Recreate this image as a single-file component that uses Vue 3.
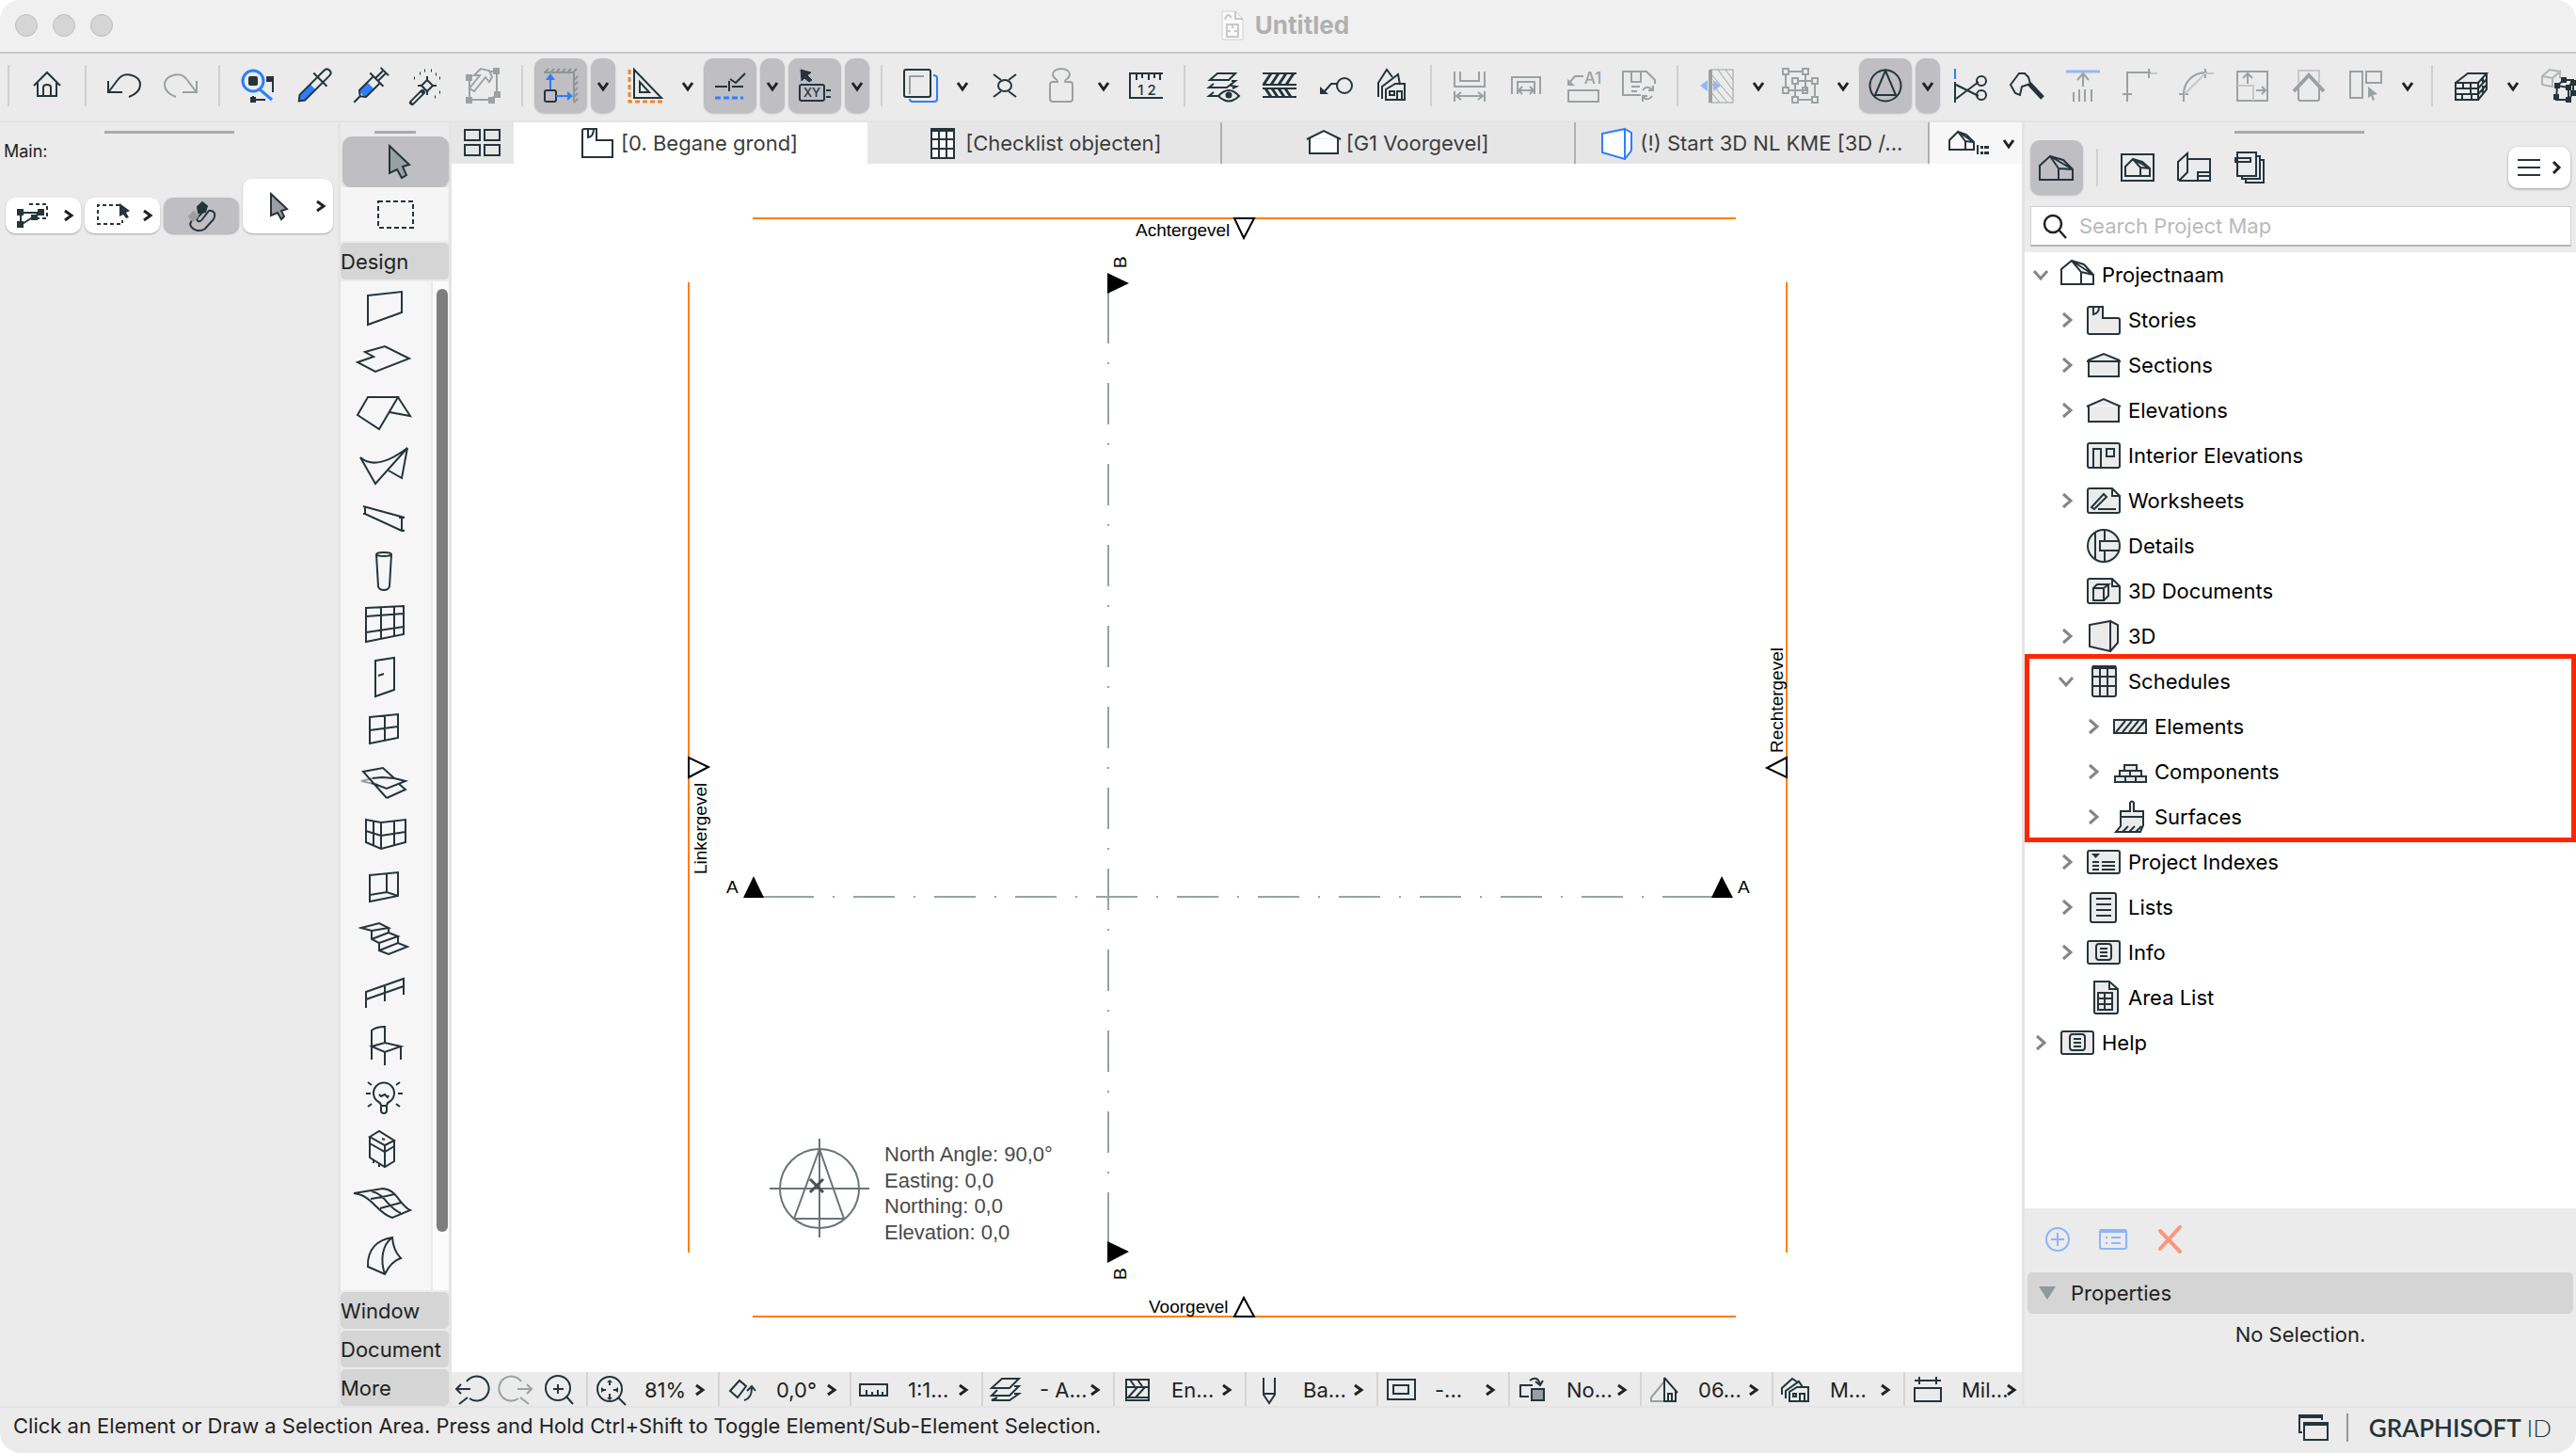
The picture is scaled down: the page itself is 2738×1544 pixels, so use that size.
<script setup>
import { ref } from 'vue'

const query = ref('')
const rect = (x, y, w, h, extra = '') => `<rect x="${x}" y="${y}" width="${w}" height="${h}" ${extra}/>`
const p = (d, extra = '') => `<path d="${d}" ${extra}/>`
const solid = 'fill="currentColor" stroke="none"'
const blue = 'stroke="#2b7fff"'
const paleBlue = 'stroke="#93b9f5"'

// Main toolbar glyphs, drawn around the origin
const bar = {
  home: p('M-14 0L0-14L14 0M-10-3V11H10V-3M-4 11V2Q-4-1 0-1Q4-1 4 2V11'),
  undo: p('M-17-5V7H-2M-16 6L-7-6C-2-13 5-12 8-11C20-8 21 6 5 12'),
  redo: p('M17-5V7H2M16 6L7-6C2-13-5-12-8-11C-20-8-21 6-5 12'),
  find: `<circle cx="-5" cy="-5" r="11" ${blue} stroke-width="3"/>` + p('M2 4L15 15', blue + ' stroke-width="3"') + rect(-10, -10, 10, 10, solid + ' rx="2"') + p('M16-10V7M16-9H11M-5 11V15H8') + rect(9, -10, 6, 6, solid) + rect(-8, 12, 6, 6, solid),
  dropper: `<g transform="rotate(45)">${p('M-4 2H4V18L0 23L-4 18Z', 'fill="#2b7fff" stroke="none"')}${p('M-4 18V-19Q-4-23 0-23Q4-23 4-19V18L0 23ZM-10-9H10')}</g>`,
  syringe: `<g transform="rotate(45)">${rect(-5, 0, 10, 13, 'fill="#2b7fff" stroke="none"')}${p('M-5-9V12L0 16L5 12V-9M0 16V25M-10-9H10M-2-9V-20M2-9V-20M-6-21H6')}</g>`,
  wand: p('M0-6L6 0L0 6L-6 0ZM0-10V-6M10 0H6M0 10V6M-10 0H-6') + p('M-5 7L-16 18', 'stroke-width="6" stroke-linecap="round"') + p('M-6 8L-16 18', 'stroke="#ebebeb" stroke-width="2"') + p('M-8-13h1M-3-16h1M4-16h1M9-12h1M13-8h1M13 7h1M-14-8h1M8 12h1', 'stroke-width="3"'),
  adjust: p('M-15-9V15H8L14 9V-15H5') + rect(-19, -12, 7, 7, solid) + rect(10, -19, 7, 7, solid) + rect(11, 6, 7, 7, solid) + rect(5, 12, 7, 7, solid) + rect(-19, 12, 7, 7, solid) + p('M-10-11L-3-18L6-16L9-9L6-4L2-9L-10 6L-15 3L-4-11Z', 'fill="#ebebeb"'),
  gravity: p('M-18-14H14V17M-17-14l4-4M-11-14l4-4M-5-14l4-4M1-14l4-4M7-14l4-4M13-14l4-4M14-6l4-4M14 0l4-4M14 6l4-4M14 12l4-4M14 18l4-4', 'stroke="#8f9497"') + rect(-17, 5, 12, 12, 'rx="2"') + p('M-11 4V-9M-5 11H10', blue) + p('M-16-6L-11-13L-6-6ZM7 6L13 11L7 16Z', 'fill="#2b7fff" stroke="none"'),
  square: p('M-17-17V17H18', 'stroke="#f58220" stroke-width="3" stroke-dasharray="5 3"') + p('M-12-17V13H17ZM-6-4V7H4Z'),
  snap: p('M-16 1H-3M2 1H14M-1-5V6') + p('M0-7L6-3L16-13') + p('M-16 13H14', blue + ' stroke-width="3" stroke-dasharray="6 3"'),
  xy: p('M-15-17L-4-14L-8-11L-3-6L-6-4L-11-8L-14-5Z', 'fill="currentColor" stroke-width="1"') + rect(-16, -1, 26, 17, 'rx="2"') + '<text x="-3" y="12" text-anchor="middle" font-size="13">XY</text>' + p('M12 5H17M12 12H17'),
  trace: rect(-17, -17, 28, 29, 'rx="2"') + p('M-11 9V-10H4', 'stroke="#999fa2"') + p('M14-11Q18-11 18-8V14Q18 17 15 17H-8Q-11 17-11 14', blue),
  node: '<ellipse rx="7" ry="6"/>' + p('M-12-12L-4-6M12-12L4-6M-12 12L-4 6M12 12L4 6'),
  stamp: p('M-4-4C-3-7-9-7-9-12A9 6 0 0 1 9-12C9-7 3-7 4-4H9Q12-4 12-1V14Q12 17 9 17H-9Q-12 17-12 14V-1Q-12-4-9-4Z'),
  ruler: p('M18-13H-17V13H18M-10-13V-6M-4-13V-8M3-13V-6M9-13V-8M15-13V-6') + '<text x="1" y="10" text-anchor="middle" font-size="15">1 2</text>',
  layers: p('M-6-13H13L6-6H-14ZM-10-2L-15 2H4L13-5L9-5M-10 7L-15 11H-4M8 0L14 1L10 3') + p('M-5 11Q6-1 17 11Q6 22-5 11Z', 'fill="#ebebeb"') + `<circle cx="6" cy="10" r="3.5" ${solid}/>`,
  hatch: p('M-18-13H18M-18-1H18M-18 3H18M-18 12H18') + p('M-17-1L-9-13M-9-1L-1-13M-1-1L7-13M7-1L15-13M-15 3L-9 12M-8 3L-2 12M-1 3L5 12M6 3L12 12', 'stroke-width="3"'),
  leader: '<circle cx="9" cy="0" r="8"/>' + p('M1-2H-5L-13 7') + p('M-17 1L-8 9L-17 9Z', solid),
  houses: p('M-15 12V-3L-6-17L0-9M-11 14V1L6-12L8-1M-7 15V4L3-2H13V15ZM5 15V6H10V15M-3 6H2V10H-3Z'),
  dimA: p('M-16-15V1H16V-15M-10-15V-5H10V-15M-16 6V17M16 6V17M-14 11H14M-9 7L-14 11L-9 15M9 7L14 11L9 15'),
  dimB: p('M-15 9V-9H15V9M-9 9V-4H9V9M-8 5H8M-4 1L-8 5L-4 9M4 1L8 5L4 9'),
  label: rect(-15, 5, 32, 12) + p('M-15-2L-8-10H1') + p('M-16-7L-8 0L-16 0Z', solid) + '<text x="11" y="-2" text-anchor="middle" font-size="17">A1</text>',
  update: p('M2 10H-17V-15H8L17-6V-2M-8-15V-4H2V-15M-8 1H1M-8 6H-2') + p('M4 5Q8-1 14 4M15 0V5H10M14 11Q10 17 4 12M4 17V11H9'),
  mirror: rect(-6, -17, 24, 35, 'stroke-width="1"') + p('M-6-17V18', 'stroke-width="4"') + p('M2-17L18 5M-6-13L18 15M-6-4L12 18M-6 6L4 18M10-17L18-6', 'stroke-width="1"') + p('M-9-6V6L-17 0ZM-3-6V6L5 0Z', 'fill="#93b9f5" stroke="none"'),
  group: p('M-16-15H5V5H-16ZM-6-5H15V15H-6Z') + [[-16, -15], [5, -15], [-16, 5], [-6, -5], [15, -5], [-6, 15], [15, 15]].map(([x, y]) => rect(x - 3, y - 3, 6, 6, 'fill="#ebebeb"')).join('') + rect(2, 2, 5, 6),
  suspend: '<circle r="16.5"/>' + p('M0-16L11 10H-11Z'),
  scissors: p('M-16-18V-7', blue) + p('M-16-4V18M-15-1L9 11M-15 14L9-4') + '<circle cx="12" cy="-5" r="5"/><circle cx="12" cy="10" r="5"/>',
  axe: p('M-8-13L-17-1L-12 8L-7 10L-5 1L4-2L2-9L-2-13Z') + p('M3-2L17 13', 'stroke-width="5"'),
  raise: p('M-18-15H18', paleBlue + ' stroke-width="3"') + p('M0 1V-12M-6-6L0-13L6-6M-10 7V17M-4 4V17M2 4V17M9 4V17'),
  corner: p('M-13 17V-14H12M-18 9H-8M10-18V-8') + p('M12-13H19', 'stroke="#c5c8ca"'),
  arc: p('M-13 17V9C-13 0-7-14 12-14M-18 9H-8M10-18V-8') + p('M-12 9L10-13H19', 'stroke="#c5c8ca"'),
  resize: rect(-16, -15, 32, 31) + p('M-16 0H1V16', 'stroke="#c5c8ca"') + p('M-5-2V-12M-10-8L-5-13L0-8M4 5H14M10 1L14 5L10 9'),
  roofUp: p('M-11-3V-16H11V-3', 'stroke="#c5c8ca"') + p('M-16 6L0-11L16 6', 'stroke-width="4"') + p('M-11 3V14Q-11 16-9 16H9Q11 16 11 14V3'),
  align: rect(-16, -15, 13, 28) + rect(1, -15, 16, 12) + p('M3 1L13 9L8 10L10 15L8 16L6 11L3 13Z', solid),
  bricks: p('M-16-3V15H8V-3ZM-16-3L-3-13H17L8-3M17-13V4L8 15M-16 3H8M-16 9H8M-8-3V3M0 3V9M-9 9V15M1 9V15M0-3V3M8 3L17-7M8 9L17-1M13-8V-2M13 0V8'),
  morph: p('M-14-1V-10L-6-17L5-15M-14-1L-3 1V-8L5-15V-8M-14-10L-3-8', 'stroke="#b0b4b6"') + p('M2 0L9-6H19V8L14 15H1ZM2 0L14 2V15M14 2L19-6') + [[2, 0], [9, -6], [14, 2], [14, 15], [1, 12], [19, 8], [19, -3]].map(([x, y]) => rect(x - 3, y - 3, 6, 6, solid)).join(''),
}

const B = (icon, opt = {}) => ({ kind: 'tool', icon, ...opt })
const gray = { dim: true }
const on = { on: true }
const D = (opt = {}) => ({ kind: 'drop', ...opt })
const S = { kind: 'sep' }
const toolbar = [
  S, B('home'), S, B('undo'), B('redo', gray), S,
  B('find'), B('dropper'), B('syringe'), B('wand'), B('adjust', gray), S,
  B('gravity', on), D(on), B('square'), D(), B('snap', on), D(on), B('xy', on), D(on), S,
  B('trace'), D(), B('node'), B('stamp', gray), D(), B('ruler'), S,
  B('layers'), B('hatch'), B('leader'), B('houses'), S,
  B('dimA', gray), B('dimB', gray), B('label', gray), B('update', gray), S,
  B('mirror', gray), D(), B('group', gray), D(), B('suspend', on), D(on),
  B('scissors'), B('axe'), B('raise', gray), B('corner', gray), B('arc', gray),
  B('resize', gray), B('roofUp', gray), B('align', gray), D(), S,
  B('bricks'), D(), B('morph'),
]

const designTools = [
  ['Wall', p('M-19-13L17-17V5L-19 18Z')],
  ['Slab', p('M-22-9L-1-15L25-2L-11 12L-30 2L-13-4Z')],
  ['Roof', p('M-19-17H13L-7 17L-30 2ZM13-17L26 3L4-1')],
  ['Shell', p('M-27-9Q-10 6 23-19L-11 19ZM23-19L17 13L3 5')],
  ['Beam', p('M-24-13L20-1M-24-5H-22L17 13H20M-22-12V-5M17-1V13M14-1H20M14 12L20 13')],
  ['Column', '<ellipse cx="-2" cy="-18" rx="8" ry="2"/>' + p('M-10-18L-8 16Q-7 20-2 20Q3 20 4 16L6-18')],
  ['Curtain wall', p('M-21-17L19-19V11L-21 19ZM-5-18V16M9-19V13M-21-8L19-11M-21 9L19 3')],
  ['Door', p('M-11-17L9-20V14L-11 21ZM-8-1L-2-3')],
  ['Window', p('M-17-13L13-16V9L-17 15ZM-1-14V12M-17 1L13-3')],
  ['Skylight', p('M-14-4L-26-1L-8 3', 'stroke="#999fa2"') + p('M1 17L-24-11L-3-15L9-4M14 2L21 8L1 17M9-4L21-1L1 7L-15 1M-14-4L-4-5L9-4')],
  ['Corner window', p('M-21-16L-5-13L21-16V8L-5 15L-21 8ZM-5-13V15M-13-14V11M9-15V11M-21-4L-5 1L21-3')],
  ['Opening', p('M-17-13L13-16V9L-17 15ZM1-14V5M-17 8L1 5L13 9')],
  ['Stair', p('M-26-13L-7-18L3-13L-15-10ZM-15-10V-1L-7 3V11L3 15L23 7L13 3L-7 11M3-13V-8L-15-1M3-8L13-4L-7 3M13-4V3')],
  ['Railing', p('M-21 16V-1L19-15V2M-1-8V9M-21 7L19-7')],
  ['Object', p('M-15 15V-16Q-10-20-1-20V-3M-15 1L-1-3L16 1L-1 7ZM-1 7V21M16 1V15')],
  ['Lamp', p('M-5 8Q-5 5-9 3A11 11 0 1 1 5 3Q1 5 1 8V13Q1 16-2 16Q-5 16-5 13ZM-5 8H1M-7-4L-5-2L-1-4L2-1L3-3M-19-17L-15-14M-21-5H-16M-19 9L-15 6M15-17L11-14M18-5H13M15 9L11 6')],
  ['Equipment', p('M-17-15L-7-21L9-11L-1-6ZM-17-15V7L-1 17L9 11V-11M-1-6V17M-17-8L-1 1L9-5M-4-13L-1-12M-13 10V13M-7 14V17')],
  ['Mesh', p('M-34-11Q-15-14-3-16C12-15 14 1 26 7L7 15C-10 10-14-9-34-11M-15-13C0-10 2 5 16 10M-16-5Q-2-7 9-10M-6 5Q5 2 16-1')],
  ['Morph', p('M-19 11C-20-8-8-18 7-20Q8-6 16 2Q6 5-1 19ZM7-20C-4-12-6 4-1 19')],
]

// Navigator tree glyphs share a 36 x 36 box
const f = 'fill="#ebebeb"'
const tree = {
  project: p('M1 28V12L12 3L22 15V28ZM12 3L25 7L35 18V28H22M22 15L35 18M12 3L35 18'),
  stories: p('M3 4H17V16H33Q35 16 35 18V31Q35 33 33 33H3Q1 33 1 31V6Q1 4 3 4ZM7 4V12Q13 11 13 4', f),
  sections: p('M2 14V30H34V14M0 14H36M1 13L18 6L35 13', f),
  elevations: p('M2 13V30H34V13M0 14L18 6L36 14', f),
  interior: rect(1, 5, 34, 26, 'rx="2" ' + f) + p('M7 31V11H15V31M21 11H29V19H21Z'),
  worksheet: p('M3 5H27L35 13V29Q35 31 33 31H3Q1 31 1 29V7Q1 5 3 5ZM27 5V13H35M5 25L18 11L21 14L8 27ZM12 27H31', f),
  details: '<circle cx="18" cy="18" r="17" fill="#ebebeb"/>' + p('M9 4V32M19 1V13M19 23V35M35 13H14V23H35'),
  docs3d: p('M3 5H27L35 13V29Q35 31 33 31H3Q1 31 1 29V7Q1 5 3 5ZM27 5V13H35M7 15H18V28H7ZM7 15L11 11H23L18 15M23 11V23L18 28', f),
  cube: p('M3 6L25 2V34L3 29ZM25 2L33 6V25L25 34', f),
  schedules: rect(6, 2, 25, 32, 'rx="2" ' + f) + p('M6 3H31', 'stroke-width="4"') + p('M6 13H31M6 23H31M14 3V34M22 3V34'),
  elements: rect(1, 11, 34, 14, f) + p('M3 24L13 12M10 24L20 12M17 24L27 12M24 24L34 12'),
  components: p('M2 29V23H35V29ZM7 23V17H30V23ZM12 17V11H25V17ZM13 23V29M24 23V29M18 17V23', f),
  surfaces: p('M18 12V3Q20 0 22 3V12H32V27L29 34H3L8 28V12ZM8 18H32M10 34L16 28M17 34L23 28M24 34L30 28', f),
  indexes: rect(1, 6, 34, 24, 'rx="2" ' + f) + p('M5 9H14L9.500 14Z', solid) + p('M6 18H13M6 22H13M6 26H13M16 18H30M16 22H30M16 26H30'),
  lists: rect(4, 3, 27, 31, 'rx="2" ' + f) + p('M10 9H26M10 15H26M10 21H26M10 27H26'),
  info: rect(1, 6, 34, 24, 'rx="2" ' + f) + rect(10, 9, 16, 17, 'rx="3"') + p('M14 14H22M14 18H22M14 22H22'),
  area: p('M8 1H24L33 9V33Q33 35 31 35H10Q8 35 8 33ZM24 1V9H33M12 13H27V31H12ZM12 19H27M12 25H27M19 13V31', f),
}
const topNodes = [
  ['Stories', 'stories', true], ['Sections', 'sections', true], ['Elevations', 'elevations', true],
  ['Interior Elevations', 'interior', false], ['Worksheets', 'worksheet', true], ['Details', 'details', false],
  ['3D Documents', 'docs3d', false], ['3D', 'cube', true],
]
const scheduleNodes = [['Elements', 'elements'], ['Components', 'components'], ['Surfaces', 'surfaces']]
const lowerNodes = [['Project Indexes', 'indexes', true], ['Lists', 'lists', true], ['Info', 'info', true], ['Area List', 'area', false]]

const tabs = [
  ['[0. Begane grond]', p('M3 3H16V15H33V33H1V5Q1 3 3 3ZM7 3V12Q13 11 13 3', 'fill="#fff"')],
  ['[Checklist objecten]', rect(6, 3, 24, 31, 'fill="#fff"') + p('M6 4H30', 'stroke-width="4"') + p('M6 14H30M6 24H30M14 3V34M22 3V34')],
  ['[G1 Voorgevel]', p('M3 13V29H33V13M0 14L18 5L36 14', 'fill="#fff"')],
  ['(!) Start 3D NL KME [3D /...', p('M2 8L26 3V35L2 28ZM26 3L33 7V26L26 35', 'fill="#fff" ' + blue)],
]

const zoomTools = [
  ['Previous zoom', false, p('M-6-8A13 13 0 1 1-3 10M-2 0H-17M-12-5L-17 0L-12 5M-5 9L-14 16')],
  ['Next zoom', true, p('M6-8A13 13 0 1 0 3 10M2 0H17M12-5L17 0L12 5M5 9L14 16')],
  ['Zoom in', false, '<circle cx="-1" cy="-1" r="13"/>' + p('M-6 0H5M-1-5V5M8 8L15 16')],
]
const quick = [
  ['81%', '<circle cx="-1" cy="-1" r="13"/>' + p('M8 8L16 16M-5 0H-10M3 0H8M-1-5V-10M-1 4V9') + p('M-10-3V3L-6 0ZM8-3V3L4 0ZM-4-8H2L-1-11ZM-4 8H2L-1 11Z', solid)],
  ['0,0°', p('M-13 1L-3-10L4-4L-5 8ZM2 11Q10 9 10-2M5 1L10-4L14 1')],
  ['1:1...', rect(-15, -6, 29, 12) + p('M-8 6V0M-2 6V2M4 6V0M9 6V2')],
  ['- A...', p('M-4-12H14L4-2H-15ZM-9 0L-15 6H4L14-4H9M-9 8L-15 11H4L14 4H9')],
  ['En...', rect(-12, -11, 24, 22) + p('M-12-3H12M-12 8H12M-8-11L-3-4M0-11L5-4M-10 8L0-3M-2 8L8-3')],
  ['Ba...', p('M-6-13V5L0 14L6 5V-13M-6 4H6')],
  ['-...', rect(-14, -11, 29, 21) + rect(-8, -5, 16, 9)],
  ['No...', rect(-1, -1, 13, 12, 'fill="#999fa2"') + p('M0-5H-13V7H-4M-3-10Q5-16 8-6M3-9L8-5L11-10')],
  ['06...', p('M0-9L-14 8V12H0', 'stroke="#999fa2"') + p('M0-13V12H12V0M0-13L14 3M4 12V4H8V12')],
  ['M...', p('M-15 5V-2L-4-12L2-8M-11 9V1L3-9L7-3M-7 12V2L1-3H13V12ZM4 12V4H9V12M-3 4H0V7H-3Z')],
  ['Mil...', rect(-14, -2, 28, 14) + p('M-14-10H14M-9-14V-6M9-14V-6')],
]
</script>

<template>
  <div class="window">
    <header class="titlebar">
      <span class="lights"><i></i><i></i><i></i></span>
      <svg class="docicon" width="24" height="32" viewBox="0 0 24 32"><path d="M1 1H15L23 9V31H1Z" fill="#fafafa" stroke="#d2d2d2" /><path d="M4 10Q7 1 11 8M15 1V9H23M6 15H18V28H6ZM6 22H10M14 22H18M12 15V19" fill="none" stroke="#c8c8c8" stroke-width="2" /></svg>
      <h1>Untitled</h1>
    </header>

    <nav class="toolbar" aria-label="Toolbar">
      <template v-for="(t, i) in toolbar" :key="i">
        <span v-if="t.kind === 'sep'" class="sep"></span>
        <button v-else-if="t.kind === 'tool'" class="tool" :class="{ on: t.on, dim: t.dim }" :aria-label="t.icon">
          <svg class="ic" width="40" height="40" viewBox="-20 -20 40 40" v-html="bar[t.icon]"></svg>
        </button>
        <button v-else class="drop" :class="{ on: t.on }" aria-label="Options">
          <svg class="chev" width="12" height="12" viewBox="-6 -6 12 12"><path d="M-5-3L0 4L5-3" /></svg>
        </button>
      </template>
    </nav>

    <div class="body">
      <aside class="info">
        <div class="grip wide"></div>
        <p>Main:</p>
        <div class="info-row">
          <button class="pill" aria-label="Favorites">
            <svg class="ic" width="34" height="28" viewBox="-17 -14 34 28"><path d="M-4-12H15V3H2" stroke-dasharray="4 3" /><path d="M-14-3H9M-13-3V10L9-4" /><path d="M-17-7h7v7h-7zM-17 6h7v7h-7zM5-7h7v7h-7zM-2-1h7v6h-7z" fill="currentColor" stroke="none" /></svg>
            <svg class="chev" width="12" height="12" viewBox="-6 -6 12 12"><path d="M-3-5L4 0L-3 5" /></svg>
          </button>
          <button class="pill" aria-label="Selection method">
            <svg class="ic" width="34" height="28" viewBox="-17 -14 34 28"><path d="M8-11H-15V9H11V5" stroke-dasharray="4 3" /><path d="M8-13L19-5L15-3L18 2L15 3L12-1L8 1Z" fill="currentColor" stroke="none" /></svg>
            <svg class="chev" width="12" height="12" viewBox="-6 -6 12 12"><path d="M-3-5L4 0L-3 5" /></svg>
          </button>
          <button class="pill magnet" aria-label="Magnet">
            <svg class="ic" width="34" height="34" viewBox="-17 -17 34 34"><path d="M-9 3L-12 9C-10 16-2 18 4 14L13 4C16-2 13-6 8-5L1 4C-2 8-6 6-4 2L4-6" /><path d="M-4-9L1-14L6-10L4-4L-3-3Z" fill="currentColor" /><path d="M-13 1L-8-4L-4 1L-9 6Z" fill="#999fa2" stroke="#999fa2" /></svg>
          </button>
          <button class="pill tall" aria-label="Arrow options">
            <svg class="ic" width="34" height="34" viewBox="-17 -17 34 34"><path d="M-7-13L10 3L4 5L7 11L4 14L0 7L-7 10Z" fill="#999fa2" /></svg>
            <svg class="chev" width="12" height="12" viewBox="-6 -6 12 12"><path d="M-3-5L4 0L-3 5" /></svg>
          </button>
        </div>
      </aside>

      <aside class="toolbox">
        <div class="grip short"></div>
        <button class="arrow" aria-label="Arrow">
          <svg class="ic" width="40" height="40" viewBox="-20 -20 40 40"><path d="M-7-17L14 3L7 5L11 14L6 17L1 8L-7 12Z" fill="#999fa2" /></svg>
        </button>
        <button class="marquee" aria-label="Marquee">
          <svg class="ic" width="40" height="32" viewBox="-20 -16 40 32"><rect x="-18" y="-14" width="37" height="28" stroke-dasharray="5 3" /></svg>
        </button>
        <button class="group design">Design</button>
        <div class="tools">
          <div class="list">
            <button v-for="[name, art] in designTools" :key="name" :aria-label="name">
              <svg class="ic" width="72" height="48" viewBox="-36 -24 72 48" v-html="art"></svg>
            </button>
          </div>
          <div class="track"><div class="thumb"></div></div>
        </div>
        <button class="group">Window</button>
        <button class="group">Document</button>
        <button class="group">More</button>
      </aside>

      <main class="workspace">
        <div class="tabs">
          <button class="overview" aria-label="Tab overview">
            <svg class="ic" width="40" height="30" viewBox="0 0 40 30"><path d="M1 1H17V12H1ZM22 1H38V12H22ZM1 17H17V28H1ZM22 17H38V28H22Z" /></svg>
          </button>
          <button v-for="([label, art], i) in tabs" :key="label" class="tab" :class="{ active: i === 0 }">
            <svg class="ic" width="36" height="36" viewBox="0 0 36 36" v-html="art"></svg>
            <span>{{ label }}</span>
          </button>
          <button class="popup" aria-label="Navigator popup">
            <svg class="ic" width="44" height="28" viewBox="0 0 44 28"><path d="M1 21V11L10 2L18 12V21ZM10 2L19 5L27 13V21H18M18 12L27 13M10 2L27 13M31 16V26" /><path d="M34 17h3v3h-3zM38 17h5v3h-5zM34 23h3v3h-3zM38 23h5v3h-5z" fill="currentColor" stroke="none" /></svg>
            <svg class="chev" width="12" height="12" viewBox="-6 -6 12 12"><path d="M-5-3L0 4L5-3" /></svg>
          </button>
        </div>

        <div class="canvas">
          <svg viewBox="480 174 1669 1284">
            <g stroke="#ff8000" stroke-width="2">
              <path d="M800 232H1845M800 1399H1845M732 300V1331M1899 300V1331" />
            </g>
            <g stroke="#98a2a5" stroke-width="2">
              <path d="M1178 300V330M1178 1300V1331M800 953H830M1800 953H1840" />
              <path d="M1178 321V1311M821 953H1811" stroke-dasharray="44 20 2 20" />
            </g>
            <path d="M1177 290L1200 301L1177 312ZM1177 1319L1200 1330L1177 1342ZM790 954L801 931L812 954ZM1819 954L1830 931L1842 954Z" fill="#000" />
            <path d="M1312 232H1333L1322 253ZM1312 1399H1333L1322 1379ZM732 805V826L753 815ZM1899 805V826L1878 816Z" fill="#fff" stroke="#000" stroke-width="2" />
            <g class="marks">
              <text x="1207" y="251">Achtergevel</text>
              <text x="1221" y="1395">Voorgevel</text>
              <text transform="translate(751 929) rotate(-90)">Linkergevel</text>
              <text transform="translate(1895 800) rotate(-90)">Rechtergevel</text>
              <text x="772" y="949">A</text>
              <text x="1847" y="949">A</text>
              <text transform="translate(1197 285) rotate(-90)">B</text>
              <text transform="translate(1197 1360) rotate(-90)">B</text>
            </g>
            <g fill="none" stroke="#697478" stroke-width="2">
              <circle cx="871" cy="1263" r="42" />
              <path d="M818 1263H924M871 1210V1315M871 1221L844 1295H897Z" />
              <path d="M861 1253L875 1267M875 1253L861 1267" stroke="#4a4f52" stroke-width="3" />
            </g>
            <g class="north">
              <text x="940" y="1234">North Angle: 90,0°</text>
              <text x="940" y="1262">Easting: 0,0</text>
              <text x="940" y="1289">Northing: 0,0</text>
              <text x="940" y="1317">Elevation: 0,0</text>
            </g>
          </svg>
        </div>

        <div class="quickbar">
          <div class="zooms">
            <button v-for="[name, dim, art] in zoomTools" :key="name" :class="{ dim }" :aria-label="name">
              <svg class="ic" width="36" height="34" viewBox="-18 -17 36 34" v-html="art"></svg>
            </button>
          </div>
          <button v-for="[label, art] in quick" :key="label" class="quick">
            <svg class="ic" width="36" height="34" viewBox="-18 -17 36 34" v-html="art"></svg>
            <span>{{ label }}</span>
            <svg class="chev" width="12" height="12" viewBox="-6 -6 12 12"><path d="M-3-5L4 0L-3 5" /></svg>
          </button>
        </div>
      </main>

      <aside class="navigator">
        <div class="grip wide"></div>
        <div class="maps">
          <button class="tool on" aria-label="Project Map">
            <svg class="ic" width="40" height="30" viewBox="0 0 40 30"><path d="M2 28V13L13 3L22 16V28ZM13 3L27 7L37 17V28H22M22 16L37 17M13 3L37 17" /></svg>
          </button>
          <span class="sep"></span>
          <button class="tool" aria-label="View Map">
            <svg class="ic" width="40" height="32" viewBox="0 0 40 32"><path d="M3 2H37V30H3ZM7 25V15L15 7L23 16V25ZM15 7L25 10L33 17V25H23M23 16L33 17M15 7L33 17" /></svg>
          </button>
          <button class="tool" aria-label="Layout Book">
            <svg class="ic" width="40" height="36" viewBox="0 0 40 36"><path d="M3 32V12L13 3V23L4 32M13 9H37V32H4M24 32V23H37M24 27H37" /></svg>
          </button>
          <button class="tool" aria-label="Publisher Sets">
            <svg class="ic" width="40" height="36" viewBox="0 0 40 36"><path d="M6 2H26V27H6ZM4 8H20V12H4ZM26 6H30V30H11V27M30 10H34V34H15V30" /></svg>
          </button>
          <button class="menu" aria-label="Navigator menu">
            <svg class="ic" width="26" height="20" viewBox="0 0 26 20"><path d="M1 2H25M1 10H25M1 18H25" /></svg>
            <svg class="chev" width="12" height="14" viewBox="-6 -7 12 14"><path d="M-3-6L3 0L-3 6" /></svg>
          </button>
        </div>
        <label class="search">
          <svg width="28" height="28" viewBox="0 0 28 28" fill="none" stroke="#222" stroke-width="2.500"><circle cx="12" cy="12" r="9" /><path d="M18 18L26 27" /></svg>
          <input v-model="query" type="search" placeholder="Search Project Map" aria-label="Search Project Map" />
        </label>

        <ul class="tree">
          <li>
            <button class="row"><svg class="tw" width="20" height="20" viewBox="-10 -10 20 20"><path d="M-7-4L0 4L7-4" /></svg><svg class="ic" width="36" height="36" viewBox="0 0 36 36" v-html="tree.project"></svg>Projectnaam</button>
            <ul>
              <li v-for="[label, icon, kids] in topNodes" :key="label">
                <button class="row l1"><svg class="tw" width="20" height="20" viewBox="-10 -10 20 20"><path v-if="kids" d="M-4-7L4 0L-4 7" /></svg><svg class="ic" width="36" height="36" viewBox="0 0 36 36" v-html="tree[icon]"></svg>{{ label }}</button>
              </li>
              <li class="highlight">
                <button class="row l1"><svg class="tw" width="20" height="20" viewBox="-10 -10 20 20"><path d="M-8-4L-1 4L6-4" /></svg><svg class="ic" width="36" height="36" viewBox="0 0 36 36" v-html="tree.schedules"></svg>Schedules</button>
                <ul>
                  <li v-for="[label, icon] in scheduleNodes" :key="label">
                    <button class="row l2"><svg class="tw" width="20" height="20" viewBox="-10 -10 20 20"><path d="M-4-7L4 0L-4 7" /></svg><svg class="ic" width="36" height="36" viewBox="0 0 36 36" v-html="tree[icon]"></svg>{{ label }}</button>
                  </li>
                </ul>
              </li>
              <li v-for="[label, icon, kids] in lowerNodes" :key="label">
                <button class="row l1"><svg class="tw" width="20" height="20" viewBox="-10 -10 20 20"><path v-if="kids" d="M-4-7L4 0L-4 7" /></svg><svg class="ic" width="36" height="36" viewBox="0 0 36 36" v-html="tree[icon]"></svg>{{ label }}</button>
              </li>
            </ul>
          </li>
          <li>
            <button class="row"><svg class="tw" width="20" height="20" viewBox="-10 -10 20 20"><path d="M-4-7L4 0L-4 7" /></svg><svg class="ic" width="36" height="36" viewBox="0 0 36 36" v-html="tree.info"></svg>Help</button>
          </li>
        </ul>

        <section class="props">
          <div class="actions">
            <button aria-label="New"><svg width="28" height="28" viewBox="-14 -14 28 28" stroke="#8ab5fb" stroke-width="2" fill="none"><circle r="12" /><path d="M-7 0H7M0-7V7" /></svg></button>
            <button aria-label="Settings"><svg width="30" height="24" viewBox="0 0 30 24" stroke="#8ab5fb" stroke-width="2" fill="none"><rect x="1" y="2" width="28" height="20" rx="2" /><path d="M1 3H29" stroke-width="4" /><path d="M7 10H9M7 16H9M13 10H23M13 16H23" /></svg></button>
            <button aria-label="Delete"><svg width="30" height="30" viewBox="-15 -15 30 30" stroke="#fb967e" stroke-width="4" stroke-linecap="round" fill="none"><path d="M-10-9L11 13M-10 10L11-13" /></svg></button>
          </div>
          <button class="props-head"><svg width="18" height="14" viewBox="0 0 18 14"><path d="M0 0H18L9 14Z" fill="#90989b" /></svg>Properties</button>
          <p>No Selection.</p>
        </section>
      </aside>
    </div>

    <footer class="status">
      <span>Click an Element or Draw a Selection Area. Press and Hold Ctrl+Shift to Toggle Element/Sub-Element Selection.</span>
      <div class="brand">
        <svg class="ic" width="34" height="30" viewBox="0 0 34 30"><path d="M5 20H2V2H26V7M7 10H32V28H7Z" /><path d="M1 3H27M7 11H33" stroke-width="4" /></svg>
        <i></i>
        <a href="#">GRAPHISOFT <span>ID</span></a>
      </div>
    </footer>
  </div>
</template>

<style>
body { background: #fff; }
</style>

<style scoped>
.window {
  min-height: 100vh; display: flex; flex-direction: column; overflow: hidden;
  background: #ebebeb; color: #222; border-radius: 22px;
  font: 22px/28px Inter, "Noto Sans", sans-serif;
}
.window :deep(*) { box-sizing: border-box; }
button { border: 0; padding: 0; margin: 0; background: none; font: inherit; color: inherit; cursor: pointer; }
ul { list-style: none; margin: 0; padding: 0; }
p, h1 { margin: 0; }
svg { flex: none; }
.ic { color: #25343b; fill: none; stroke: currentColor; stroke-width: 2; overflow: visible; display: block; }
.ic :deep(text) { fill: currentColor; stroke: none; font-weight: 500; }
.dim .ic { color: #9ba1a3; }
.chev { fill: none; stroke: #222; stroke-width: 3; overflow: visible; display: block; }

.titlebar {
  position: relative; height: 57px; display: flex; align-items: center; justify-content: center; gap: 12px;
  padding: 0 6px 2px 0; background: #f0f0f0; border-bottom: 2px solid #c8c8c8;
}
.titlebar h1 { font-size: 26px; font-weight: 700; color: #b0b0b0; }
.lights { position: absolute; left: 16px; display: flex; gap: 16px; }
.lights i { width: 24px; height: 24px; border-radius: 50%; background: #d5d5d5; border: 1px solid #bdbdbd; }

.toolbar { height: 73px; display: flex; align-items: center; gap: 4px; padding-bottom: 3px; border-bottom: 2px solid #e4e4e4; overflow: hidden; }
.tool, .drop { flex: none; height: 58px; display: flex; align-items: center; justify-content: center; border-radius: 10px; }
.tool { width: 56px; }
.drop { width: 26px; }
.on { background: #bfbec3; box-shadow: 0 1px 2px rgba(0, 0, 0, .2); }
.sep { flex: none; width: 18px; height: 44px; background: linear-gradient(#d0d0d0, #d0d0d0) center / 2px 100% no-repeat; }

.body { flex: 1; display: flex; min-height: 0; }
.grip { height: 3px; margin: 9px auto 0; background: #aaa; }
.wide { width: 138px; }
.short { width: 44px; }

.info { flex: none; width: 362px; border-right: 3px solid #e4e4e4; }
.info p { margin: 5px 0 0 4px; font-size: 18px; }
.info-row { display: flex; align-items: flex-end; gap: 4px; margin: 15px 4px 0 6px; }
.pill {
  width: 80px; height: 38px; display: flex; align-items: center; justify-content: flex-end; gap: 14px; padding-right: 8px;
  background: #fff; border-radius: 10px; box-shadow: 0 1px 2px rgba(0, 0, 0, .3);
}
.magnet { justify-content: center; padding: 0; background: #bfbec3; }
.tall { width: 96px; height: 58px; gap: 22px; }

.toolbox { flex: none; width: 118px; display: flex; flex-direction: column; border-right: 3px solid #e4e4e4; }
.arrow {
  margin: 3px 0 0 2px; height: 54px; display: grid; place-items: center;
  border-radius: 10px; background: #bfbec3; box-shadow: 0 1px 2px rgba(0, 0, 0, .2);
}
.marquee { height: 57px; display: grid; place-items: center; background: #f5f5f5; }
.group {
  height: 39px; margin-top: 2px; text-align: left;
  background: #d5d5d5; border-radius: 5px;
}
.tools { flex: 1; display: flex; gap: 2px; margin-top: 2px; background: #ebebeb; }
.list { flex: 1; background: #f6f6f6; }
.list button { width: 100%; height: 56px; display: grid; place-items: center; }
.track { width: 17px; background: #fbfbfb; padding: 8px 1px 62px 4px; display: flex; }
.thumb { width: 12px; border-radius: 6px; background: #7e7e7e; }

.workspace { flex: 1; min-width: 0; display: flex; flex-direction: column; background: #fff; }
.tabs { height: 44px; display: flex; background: #e6e6e6; color: #3c3c3c; }
.overview { flex: none; width: 66px; display: grid; place-items: center; }
.tab { flex: 1; min-width: 0; display: flex; align-items: center; justify-content: center; gap: 6px; border-right: 2px solid #b0b0b0; white-space: nowrap; }
.tab.active { background: #fff; border-color: #fff; }
.popup { flex: none; width: 98px; display: flex; align-items: center; padding-left: 20px; gap: 14px; background: #f7f7f7; }

.canvas { flex: 1; position: relative; }
.canvas svg { position: absolute; inset: 0; width: 100%; height: 100%; font-family: "Liberation Sans", Arial, sans-serif; }
.marks { font-size: 19px; fill: #000; }
.north { font-size: 22px; fill: #4a4a4a; }

.quickbar { height: 36px; display: flex; background: #ebebeb; }
.zooms { flex: none; width: 143px; display: flex; justify-content: space-between; padding: 0 11px 0 4px; align-items: center; }
.quick {
  flex: 0 1 140px; min-width: 0; display: grid; grid-template-columns: 36px 1fr 12px; align-items: center;
  padding: 2px 14px 0 6px; border-left: 2px solid #d4d4d4; text-align: left; white-space: nowrap;
}
.quick:last-child { flex: 1 1 0; padding-right: 6px; }
.quick span { min-width: 0; padding-left: 18px; }

.navigator { flex: none; width: 589px; display: flex; flex-direction: column; border-left: 3px solid #e4e4e4; }
.navigator > .grip { margin-left: 223px; }
.maps { display: flex; align-items: center; gap: 4px; margin: 7px 6px 0; height: 58px; }
.maps .sep { width: 22px; height: 40px; }
.menu {
  width: 66px; height: 44px; margin-left: auto; display: flex; align-items: center; justify-content: center; gap: 10px;
  background: #fff; border-radius: 10px; box-shadow: 0 1px 3px rgba(0, 0, 0, .35);
}
.search {
  display: flex; align-items: center; gap: 12px; height: 43px; margin: 12px 5px 6px 6px; padding-left: 11px;
  background: #fff; border: 1px solid #cfcfcf; border-bottom: 2px solid #b5b5b5;
}
.search input { flex: 1; min-width: 0; padding: 0; border: 0; outline: 0; background: none; font: inherit; color: #222; }
.search input::placeholder { color: #b9b9b9; opacity: 1; }

.tree { flex: 1; background: #fff; color: #000; }
.row { width: 100%; height: 48px; display: flex; align-items: center; padding-left: 7px; text-align: left; white-space: nowrap; }
.row .ic { margin: 0 8px 0 11px; }
.l1 { padding-left: 35px; }
.l2 { padding-left: 63px; }
.tw { fill: none; stroke: #858585; stroke-width: 3; }
.highlight { position: relative; }
.highlight::after { content: ""; position: absolute; inset: 0; top: -5px; bottom: -3px; border: 5px solid #ff2600; pointer-events: none; }

.props { height: 210px; padding: 0 3px; }
.actions { display: flex; align-items: center; height: 66px; padding-left: 18px; gap: 30px; margin-bottom: 2px; }
.actions svg { display: block; }
.props-head {
  width: 100%; height: 44px; display: flex; align-items: center; gap: 16px; padding-left: 12px;
  background: #d5d5d5; border-radius: 5px;
}
.props p { text-align: center; margin-top: 8px; }

.status { height: 50px; display: flex; align-items: center; justify-content: space-between; padding: 0 26px 10px 14px; border-top: 2px solid #e4e4e4; }
.status > span { white-space: nowrap; }
.brand { display: flex; align-items: center; gap: 18px; padding-top: 4px; }
.brand i { width: 2px; height: 30px; background: #90989b; }
.brand a { color: #25343b; text-decoration: none; font: 600 26px/30px Lato, sans-serif; margin-left: 4px; }
.brand a span { font-weight: 300; }
</style>
